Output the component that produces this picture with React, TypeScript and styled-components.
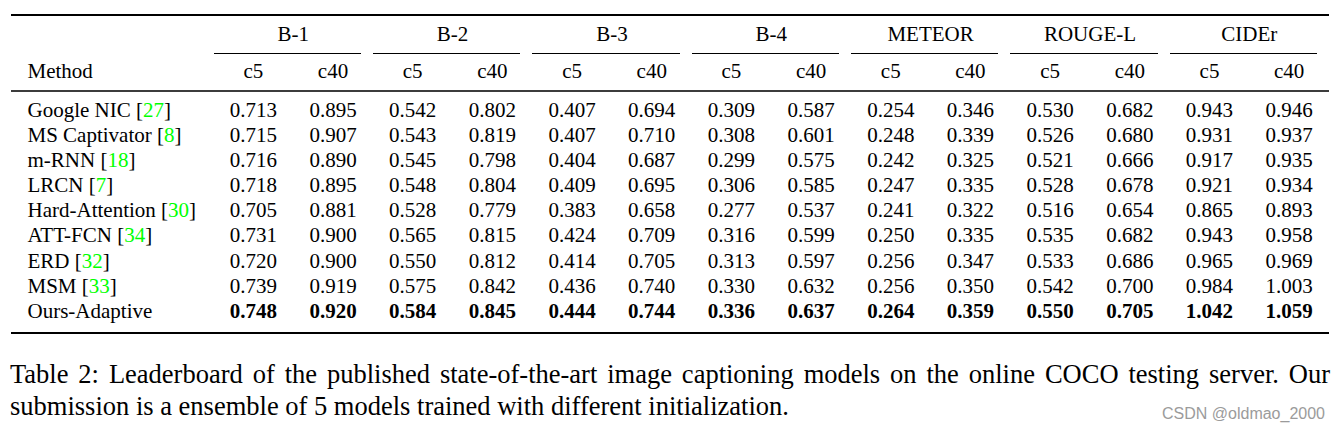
import styled, { createGlobalStyle } from 'styled-components';

const GlobalStyle = createGlobalStyle`
  html, body {
    margin: 0;
    padding: 0;
    background: #fff;
  }
  body {
    width: 1340px;
    height: 431px;
    overflow: hidden;
    font-family: 'Liberation Serif', 'Times New Roman', serif;
    color: #000;
  }
`;

const metrics = ['B-1', 'B-2', 'B-3', 'B-4', 'METEOR', 'ROUGE-L', 'CIDEr'];

type Row = { method: string; cite?: string; values: string[]; best?: boolean };

const rows: Row[] = [
  { method: 'Google NIC', cite: '27', values: ['0.713', '0.895', '0.542', '0.802', '0.407', '0.694', '0.309', '0.587', '0.254', '0.346', '0.530', '0.682', '0.943', '0.946'] },
  { method: 'MS Captivator', cite: '8', values: ['0.715', '0.907', '0.543', '0.819', '0.407', '0.710', '0.308', '0.601', '0.248', '0.339', '0.526', '0.680', '0.931', '0.937'] },
  { method: 'm-RNN', cite: '18', values: ['0.716', '0.890', '0.545', '0.798', '0.404', '0.687', '0.299', '0.575', '0.242', '0.325', '0.521', '0.666', '0.917', '0.935'] },
  { method: 'LRCN', cite: '7', values: ['0.718', '0.895', '0.548', '0.804', '0.409', '0.695', '0.306', '0.585', '0.247', '0.335', '0.528', '0.678', '0.921', '0.934'] },
  { method: 'Hard-Attention', cite: '30', values: ['0.705', '0.881', '0.528', '0.779', '0.383', '0.658', '0.277', '0.537', '0.241', '0.322', '0.516', '0.654', '0.865', '0.893'] },
  { method: 'ATT-FCN', cite: '34', values: ['0.731', '0.900', '0.565', '0.815', '0.424', '0.709', '0.316', '0.599', '0.250', '0.335', '0.535', '0.682', '0.943', '0.958'] },
  { method: 'ERD', cite: '32', values: ['0.720', '0.900', '0.550', '0.812', '0.414', '0.705', '0.313', '0.597', '0.256', '0.347', '0.533', '0.686', '0.965', '0.969'] },
  { method: 'MSM', cite: '33', values: ['0.739', '0.919', '0.575', '0.842', '0.436', '0.740', '0.330', '0.632', '0.256', '0.350', '0.542', '0.700', '0.984', '1.003'] },
  { method: 'Ours-Adaptive', values: ['0.748', '0.920', '0.584', '0.845', '0.444', '0.744', '0.336', '0.637', '0.264', '0.359', '0.550', '0.705', '1.042', '1.059'], best: true },
];

const Page = styled.div`
  position: relative;
  width: 1340px;
  height: 431px;
  padding-top: 14px;
  box-sizing: border-box;
`;

const Table = styled.div`
  display: flex;
  flex-direction: column;
  margin: 0 11px;
  border-top: 2px solid #000;
  border-bottom: 2px solid #000;
  font-size: 21px;
`;

const Row = styled.div`
  display: grid;
  grid-template-columns: 202.5px repeat(14, 1fr);
  line-height: 25.1px;
`;

const GroupRow = styled(Row)`
  padding-top: 6px;
`;

const Group = styled.div`
  grid-column: span 2;
  display: flex;
  flex-direction: column;
  text-align: center;
  line-height: 25px;
`;

const GroupLabel = styled.div`
  padding-bottom: 6px;
`;

const CMidRule = styled.div`
  height: 1px;
  margin-right: 12px;
  background: #000;
`;

const HeadRow = styled(Row)`
  padding: 5px 0 6px;
  line-height: 25px;
`;

const MidRule = styled.div`
  height: 2px;
  background: #3c3c3c;
`;

const Body = styled.div`
  padding: 6px 0 8px;
`;

const MethodCell = styled.div`
  padding-left: 16.5px;
  white-space: nowrap;
`;

const Cell = styled.div<{ $bold?: boolean }>`
  text-align: center;
  font-weight: ${({ $bold }) => ($bold ? 700 : 400)};
`;

const Cite = styled.span`
  color: #00ff00;
`;

const Caption = styled.div`
  margin: 24px 10px 0;
  font-size: 26.5px;
  line-height: 32px;
`;

const CaptionLine = styled.div`
  text-align: justify;
  text-align-last: justify;
  white-space: nowrap;
`;

const CaptionLast = styled.div`
  text-align: left;
`;

const Watermark = styled.div`
  position: absolute;
  right: 15px;
  top: 405.7px;
  font-family: 'Liberation Sans', Arial, sans-serif;
  font-size: 16px;
  line-height: 16px;
  color: #9b9b9b;
`;

export default function App() {
  return (
    <Page>
      <GlobalStyle />
      <Table>
        <GroupRow>
          <div />
          {metrics.map((m) => (
            <Group key={m}>
              <GroupLabel>{m}</GroupLabel>
              <CMidRule />
            </Group>
          ))}
        </GroupRow>
        <HeadRow>
          <MethodCell>Method</MethodCell>
          {metrics.flatMap((m) => [
            <Cell key={m + 'c5'}>c5</Cell>,
            <Cell key={m + 'c40'}>c40</Cell>,
          ])}
        </HeadRow>
        <MidRule />
        <Body>
          {rows.map((r) => (
            <Row key={r.method}>
              <MethodCell>
                {r.method}
                {r.cite && (
                  <>
                    {' '}[<Cite>{r.cite}</Cite>]
                  </>
                )}
              </MethodCell>
              {r.values.map((v, i) => (
                <Cell key={i} $bold={r.best}>
                  {v}
                </Cell>
              ))}
            </Row>
          ))}
        </Body>
      </Table>
      <Caption>
        <CaptionLine>
          Table 2: Leaderboard of the published state-of-the-art image captioning models on the online COCO testing server. Our
        </CaptionLine>
        <CaptionLast>
          submission is a ensemble of 5 models trained with different initialization.
        </CaptionLast>
      </Caption>
      <Watermark>CSDN @oldmao_2000</Watermark>
    </Page>
  );
}
